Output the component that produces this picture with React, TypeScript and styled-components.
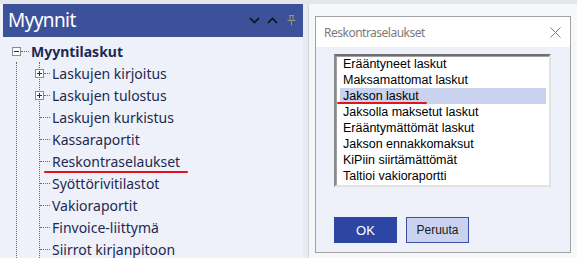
import React from "react";
import styled, { createGlobalStyle } from "styled-components";

const GlobalStyle = createGlobalStyle`
  html, body { margin: 0; padding: 0; }
  body {
    width: 577px;
    height: 258px;
    overflow: hidden;
    background: #e5e7ed;
    font-family: "Noto Sans", "Open Sans", sans-serif;
  }
`;

const Screen = styled.div`
  display: flex;
  flex-direction: column;
  width: 577px;
  height: 258px;
`;

const TopStrip = styled.div`
  height: 4px;
  background: #e4e6ec;
  flex: none;
`;

const Main = styled.div`
  display: flex;
  flex: 1;
  min-height: 0;
`;

/* ---------- left pane ---------- */
const LeftPane = styled.div`
  width: 303px;
  background: #eef1fa;
  display: flex;
  flex-direction: column;
  overflow: hidden;
`;

const PaneHeader = styled.div`
  margin-left: 3px;
  height: 33px;
  background: #3c5199;
  display: flex;
  align-items: center;
  padding: 0 7px 0 5px;
  flex: none;
`;

const PaneTitle = styled.span`
  color: #ffffff;
  font-size: 19px;
  letter-spacing: -0.6px;
  flex: 1;
  line-height: 1;
  padding-bottom: 1px;
`;

const HeaderIcon = styled.span<{ $gap: number }>`
  display: inline-flex;
  margin-left: ${(p) => p.$gap}px;
`;

const Tree = styled.div`
  padding-top: 3px;
  color: #1d2950;
`;

const Row = styled.div<{ $bold?: boolean }>`
  height: 22px;
  display: flex;
  align-items: center;
  font-size: 14px;
  font-weight: ${(p) => (p.$bold ? 700 : 400)};
  white-space: nowrap;
`;

const RootRow = styled(Row)`
  padding-left: 12px;
`;

const ExpBox = styled.span<{ $offset?: number }>`
  width: 9px;
  height: 9px;
  box-sizing: border-box;
  border: 1px solid #8c8c8c;
  background: #fbfbfb;
  margin-left: ${(p) => p.$offset ?? 0}px;
  display: inline-flex;
  align-items: center;
  justify-content: center;
  position: relative;
  flex: none;
  &::before {
    content: "";
    width: 5px;
    height: 1px;
    background: #2a2a50;
  }
`;

const PlusBox = styled(ExpBox)`
  &::after {
    content: "";
    position: absolute;
    width: 1px;
    height: 5px;
    background: #2a2a50;
  }
`;

const HDots = styled.span<{ $w: number }>`
  width: ${(p) => p.$w}px;
  border-top: 1px dotted #6a6a6a;
  margin-right: 2px;
  flex: none;
`;

const RootChildren = styled.div`
  margin-left: 16px;
  border-left: 1px dotted #6a6a6a;
  padding-left: 22px;
`;

const ChildList = styled.div`
  border-left: 1px dotted #6a6a6a;
`;

const LabelWrap = styled.span<{ $mark?: boolean }>`
  position: relative;
  &::after {
    content: "";
    display: ${(p) => (p.$mark ? "block" : "none")};
    position: absolute;
    left: -8px;
    right: -8px;
    top: 19px;
    height: 2px;
    background: #e3141c;
    border-radius: 1px;
  }
`;

/* ---------- right side ---------- */
const Gutter = styled.div`
  width: 5px;
  background: #e9ebf0;
  border-right: 1px solid #d2d5dc;
`;

const Workspace = styled.div`
  flex: 1;
  background: #f6f7f9;
  padding: 12px 0 0 6px;
`;

const Dialog = styled.div`
  width: 256px;
  height: 237px;
  box-sizing: border-box;
  border: 1px solid #a2a2a2;
  background: #eef1fa;
  display: flex;
  flex-direction: column;
`;

const TitleBar = styled.div`
  height: 30px;
  background: #ffffff;
  display: flex;
  align-items: center;
  padding: 0 9px 0 8px;
  flex: none;
`;

const DialogTitle = styled.span`
  flex: 1;
  color: #7b7b7b;
  font-size: 12px;
  letter-spacing: -0.5px;
`;

const DialogBody = styled.div`
  padding: 7px 0 0 18px;
  display: flex;
  flex-direction: column;
`;

const ListBox = styled.div`
  width: 217px;
  height: 133px;
  box-sizing: border-box;
  background: #ffffff;
  border-style: solid;
  border-width: 2px;
  border-color: #6e6e6e #e2e2e2 #e2e2e2 #8a8a8a;
  box-shadow: inset 1px 1px 0 #a0a0a0;
  display: flex;
  flex-direction: column;
  font-family: "Liberation Sans", Arial, sans-serif;
  font-size: 12.5px;
  color: #000000;
`;

const ListItem = styled.div<{ $selected?: boolean; $mark?: boolean }>`
  height: 16px;
  line-height: 16px;
  margin: 0 3px 0 4px;
  padding-left: 3px;
  background: ${(p) => (p.$selected ? "#c9d3ee" : "transparent")};
  position: relative;
  white-space: nowrap;
  &::after {
    content: "";
    display: ${(p) => (p.$mark ? "block" : "none")};
    position: absolute;
    left: -3px;
    width: 90px;
    top: 14px;
    height: 2px;
    background: #e3141c;
    border-radius: 1px;
  }
`;

const ButtonRow = styled.div`
  display: flex;
  gap: 9px;
  margin-top: 30px;
`;

const Button = styled.button<{ $primary?: boolean }>`
  width: 63px;
  height: 26px;
  box-sizing: border-box;
  font-family: "Liberation Sans", Arial, sans-serif;
  font-size: ${(p) => (p.$primary ? "13px" : "12px")};
  color: ${(p) => (p.$primary ? "#ffffff" : "#1a1a1a")};
  background: ${(p) => (p.$primary ? "#2d46a4" : "#c9d3ef")};
  border: 1px solid ${(p) => (p.$primary ? "#2d46a4" : "#3d4f9f")};
  padding: 0;
  cursor: pointer;
`;

const Chevron = ({ up }: { up?: boolean }) => (
  <svg width="11" height="7" viewBox="0 0 11 7">
    <path
      d={up ? "M1 6 L5.5 1.5 L10 6" : "M1 1 L5.5 5.5 L10 1"}
      fill="none"
      stroke="#111"
      strokeWidth="1.6"
    />
  </svg>
);

const Pin = () => (
  <svg width="9" height="11" viewBox="0 0 9 11">
    <path
      d="M2 0.5 H7 M3 0.5 V5.5 M6 0.5 V5.5 M0.5 5.5 H8.5 M4.5 5.5 V10.5"
      fill="none"
      stroke="#9b9372"
      strokeWidth="1"
    />
  </svg>
);

const CloseIcon = () => (
  <svg width="11" height="11" viewBox="0 0 11 11">
    <path d="M0.5 0.5 L10.5 10.5 M10.5 0.5 L0.5 10.5" stroke="#7a7a7a" strokeWidth="1" />
  </svg>
);

const children: { label: string; expandable?: boolean; mark?: boolean }[] = [
  { label: "Laskujen kirjoitus", expandable: true },
  { label: "Laskujen tulostus", expandable: true },
  { label: "Laskujen kurkistus" },
  { label: "Kassaraportit" },
  { label: "Reskontraselaukset", mark: true },
  { label: "Syöttörivitilastot" },
  { label: "Vakioraportit" },
  { label: "Finvoice-liittymä" },
  { label: "Siirrot kirjanpitoon" },
];

const listItems = [
  "Erääntyneet laskut",
  "Maksamattomat laskut",
  "Jakson laskut",
  "Jaksolla maksetut laskut",
  "Erääntymättömät laskut",
  "Jakson ennakkomaksut",
  "KiPiin siirtämättömät",
  "Taltioi vakioraportti",
];

export default function App() {
  return (
    <>
      <GlobalStyle />
      <Screen>
        <TopStrip />
        <Main>
          <LeftPane>
            <PaneHeader>
              <PaneTitle>Myynnit</PaneTitle>
              <HeaderIcon $gap={0}>
                <Chevron />
              </HeaderIcon>
              <HeaderIcon $gap={7}>
                <Chevron up />
              </HeaderIcon>
              <HeaderIcon $gap={9}>
                <Pin />
              </HeaderIcon>
            </PaneHeader>
            <Tree>
              <RootRow $bold>
                <ExpBox />
                <HDots $w={8} />
                <span>Myyntilaskut</span>
              </RootRow>
              <RootChildren>
                <ChildList>
                  {children.map((c) => (
                    <Row key={c.label}>
                      {c.expandable ? (
                        <>
                          <PlusBox $offset={-5} />
                          <HDots $w={6} />
                        </>
                      ) : (
                        <HDots $w={10} />
                      )}
                      <LabelWrap $mark={c.mark}>{c.label}</LabelWrap>
                    </Row>
                  ))}
                </ChildList>
              </RootChildren>
            </Tree>
          </LeftPane>
          <Gutter />
          <Workspace>
            <Dialog>
              <TitleBar>
                <DialogTitle>Reskontraselaukset</DialogTitle>
                <CloseIcon />
              </TitleBar>
              <DialogBody>
                <ListBox>
                  {listItems.map((t, i) => (
                    <ListItem key={t} $selected={i === 2} $mark={i === 2}>
                      {t}
                    </ListItem>
                  ))}
                </ListBox>
                <ButtonRow>
                  <Button $primary>OK</Button>
                  <Button>Peruuta</Button>
                </ButtonRow>
              </DialogBody>
            </Dialog>
          </Workspace>
        </Main>
      </Screen>
    </>
  );
}
